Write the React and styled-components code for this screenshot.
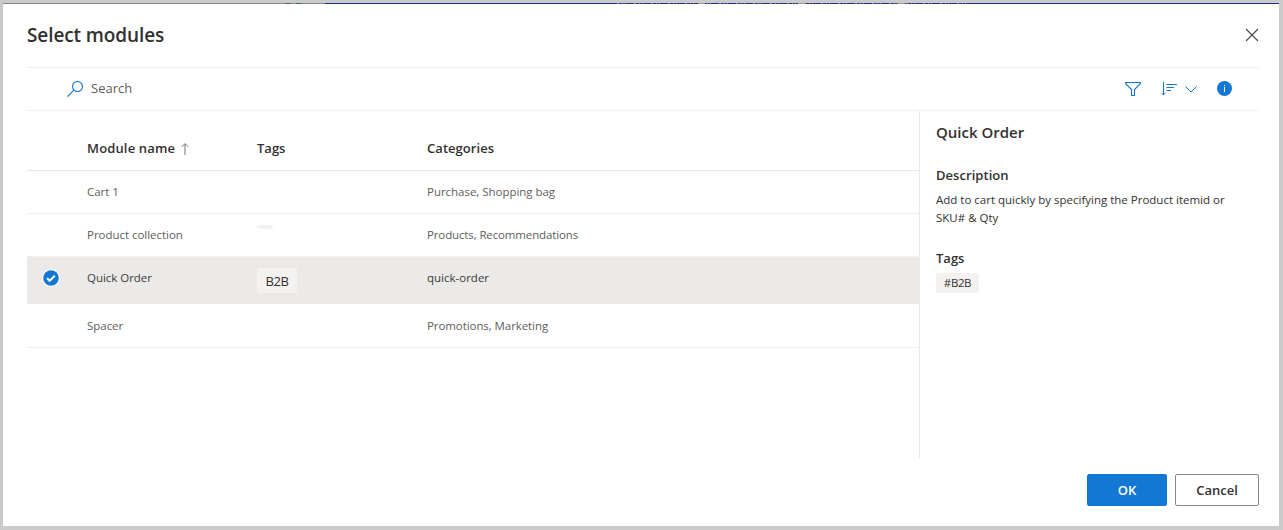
import React from "react";
import styled, { createGlobalStyle, css } from "styled-components";

const GlobalStyle = createGlobalStyle`
  * { box-sizing: border-box; }
  html, body { margin: 0; height: 100%; }
  #root { height: 100%; }
  body {
    background: #cacaca;
    color: #323130;
    font-family: "Open Sans", "Noto Sans", sans-serif;
    overflow: hidden;
  }
`;

const Overlay = styled.div`
  height: 530px;
  padding: 3px 4px 4px 3px;
  background: #cacaca;
`;

const Dialog = styled.section`
  display: flex;
  flex-direction: column;
  height: 523px;
  background: #fff;
`;

const PageEdge = styled.div`
  display: flex;
  flex: none;
  height: 1px;
`;

const EdgeGray = styled.div`
  width: 322px;
  background: linear-gradient(90deg, #858585 283px, #465a73 283px 287px, #858585 287px 293px, #465a73 293px 298px, #858585 298px);
`;

const EdgeNavy = styled.div`
  width: ${(p) => p.$width || "auto"};
  flex: ${(p) => (p.$width ? "none" : 1)};
  background: #17377a;
`;

const EdgeDots = styled.div`
  width: 351px;
  background:
    repeating-linear-gradient(90deg, transparent 0 81px, #9a9a9a 81px 88px, transparent 88px 100px),
    repeating-linear-gradient(90deg, #77808f 0 2px, #17377a 2px 5px, #77808f 5px 6px, #17377a 6px 8px, #77808f 8px 9px, #17377a 9px 17px);
`;

const Header = styled.header`
  display: flex;
  flex: none;
  justify-content: space-between;
  height: 63px;
  padding: 0 20px 0 24px;
`;

const Title = styled.h1`
  margin: 17px 0 0;
  font-size: 19px;
  font-weight: 600;
  line-height: 28px;
  letter-spacing: -0.1px;
`;

const CloseButton = styled.button`
  width: 14px;
  height: 14px;
  margin-top: 24px;
  padding: 0;
  border: 0;
  background: none;
  svg { display: block; }
`;

const Toolbar = styled.div`
  display: flex;
  flex: none;
  align-items: center;
  height: 44px;
  margin: 0 20px 0 24px;
  padding: 0 26px 0 40px;
  border-top: 1px solid #f1f0ef;
  border-bottom: 1px solid #f1f0ef;
  svg { display: block; flex: none; }
`;

const SearchLabel = styled.label`
  flex: 1;
  margin-left: 8px;
  padding-bottom: 2px;
  color: #605e5c;
  font-size: 13px;
  line-height: 20px;
`;

const ToolbarActions = styled.div`
  display: flex;
  align-items: center;
`;

const SortGroup = styled.div`
  display: flex;
  align-items: center;
  gap: 8px;
  margin: 0 20px 0 20px;
`;

const Body = styled.div`
  display: flex;
  flex: none;
  height: 347px;
  margin: 0 20px 0 24px;
`;

const Table = styled.div`
  width: 892px;
`;

const columns = css`
  display: grid;
  grid-template-columns: 60px 170px 170px 1fr;
  align-items: start;
`;

const HeadRow = styled.div`
  ${columns}
  height: 60px;
  padding-top: 27px;
  border-bottom: 1px solid #eae9e8;
`;

const HeadCell = styled.div`
  display: flex;
  font-size: 13px;
  font-weight: 600;
  line-height: 20px;
  letter-spacing: ${(p) => p.$track || "0"};
  svg { display: block; margin: 5px 0 0 5.5px; }
`;

const Row = styled.div`
  ${columns}
  height: ${(p) => p.$height}px;
  padding-top: ${(p) => p.$inset || 11}px;
  border-bottom: 1px solid ${(p) => (p.$selected ? "#ebeae9" : "#f1f0ef")};
  background: ${(p) => (p.$selected ? "#ebeae9" : "#fff")};
  color: ${(p) => (p.$selected ? "#3b3a39" : "#605e5c")};
`;

const Cell = styled.div`
  font-size: 11.5px;
  line-height: 20px;
  letter-spacing: ${(p) => p.$track || "0"};
  white-space: nowrap;
`;

const CheckCell = styled.div`
  padding: 1px 0 0 15px;
  svg { display: block; }
`;

const RowTag = styled.span`
  display: block;
  width: 40px;
  height: 25px;
  border-radius: 2px;
  background: #f3f2f1;
  color: #323130;
  font-size: 13px;
  line-height: 26px;
  letter-spacing: -0.4px;
  text-align: center;
`;

const EmptyTag = styled.span`
  display: block;
  width: 16px;
  height: 4px;
  border-radius: 2px;
  background: #f3f2f1;
`;

const Details = styled.aside`
  flex: 1;
  padding: 10px 0 0 16px;
  border-left: 1px solid #eae9e8;
`;

const DetailsTitle = styled.h2`
  margin: 0 0 22px;
  font-size: 15px;
  font-weight: 600;
  line-height: 22px;
`;

const DetailsHeading = styled.h3`
  margin: 0;
  font-size: 13px;
  font-weight: 600;
  line-height: 20px;
  letter-spacing: ${(p) => p.$track || "0"};
`;

const Description = styled.p`
  width: 300px;
  margin: 6px 0 21px;
  font-size: 11.5px;
  line-height: 18px;
`;

const DetailsTag = styled.span`
  display: block;
  width: 43px;
  height: 20px;
  margin-top: 5px;
  border-radius: 2px;
  background: #f3f2f1;
  font-size: 11.5px;
  line-height: 20px;
  letter-spacing: -0.4px;
  text-align: center;
`;

const Footer = styled.footer`
  display: flex;
  flex: none;
  justify-content: flex-end;
  gap: 8px;
  padding: 16px 20px 20px;
`;

const Button = styled.button`
  width: ${(p) => (p.$primary ? 80 : 84)}px;
  height: 32px;
  padding: 0;
  border: 1px solid ${(p) => (p.$primary ? "#1278d3" : "#8a8886")};
  border-radius: 2px;
  background: ${(p) => (p.$primary ? "#1278d3" : "#fff")};
  color: ${(p) => (p.$primary ? "#fff" : "#323130")};
  font-family: inherit;
  font-size: 13px;
  font-weight: 600;
  line-height: 30px;
`;

const BLUE = "#1278d3";

const CloseIcon = () => (
  <svg width="14" height="14" fill="none" stroke="#484644" strokeWidth="1.1">
    <path d="M1 1l12 12M13 1l-12 12" />
  </svg>
);

const SearchIcon = () => (
  <svg width="16" height="16" fill="none" stroke={BLUE} strokeWidth="1.1">
    <circle cx="10.5" cy="5.5" r="5" />
    <path d="M6.9 9.1L.4 15.6" />
  </svg>
);

const FilterIcon = () => (
  <svg width="16" height="16" fill="none" stroke={BLUE} strokeWidth="1.1">
    <path d="M.5 1.5h15v1L9.5 8.6v5.9h-3V8.6L.5 2.5z" />
  </svg>
);

const SortIcon = () => (
  <svg width="16" height="16" fill="none" stroke={BLUE} strokeWidth="1">
    <path d="M2.5 1v13M.3 11.7l2.2 2.2 2.2-2.2" />
    <path d="M5.5 3.5H16M5.5 6.5H13M5.5 9.5H10" strokeWidth="1.2" />
  </svg>
);

const ChevronIcon = () => (
  <svg width="12" height="16" fill="none" stroke={BLUE} strokeWidth="1">
    <path d="M.4 5.4L6 11l5.6-5.6" />
  </svg>
);

const InfoIcon = () => (
  <svg width="16" height="16">
    <circle cx="7.5" cy="7.5" r="7.5" fill={BLUE} />
    <path d="M7 6h1v5H7zM7 4h1v1H7z" fill="#fff" />
  </svg>
);

const SortUpIcon = () => (
  <svg width="8" height="12" fill="none" stroke="#797775" strokeWidth="1">
    <path d="M4 .7v11.3M.9 3.8L4 .7l3.1 3.1" />
  </svg>
);

const CheckIcon = () => (
  <svg width="18" height="18">
    <circle cx="9" cy="9" r="9" fill="#fff" />
    <circle cx="9" cy="9" r="7.8" fill={BLUE} />
    <path d="M5 9.2l2.7 2.6 5.2-5.2" fill="none" stroke="#fff" strokeWidth="2" />
  </svg>
);

const rows = [
  { name: "Cart 1", categories: "Purchase, Shopping bag", height: 43, track: "-0.03px" },
  { name: "Product collection", categories: "Products, Recommendations", height: 43, tag: "", track: "-0.13px" },
  { name: "Quick Order", categories: "quick-order", height: 47, tag: "B2B", selected: true },
  { name: "Spacer", categories: "Promotions, Marketing", height: 44, inset: 12, track: "-0.08px" },
];

export default function App() {
  return (
    <Overlay>
      <GlobalStyle />
      <Dialog>
        <PageEdge>
          <EdgeGray />
          <EdgeNavy $width="292px" />
          <EdgeDots />
          <EdgeNavy />
        </PageEdge>
        <Header>
          <Title>Select modules</Title>
          <CloseButton aria-label="Close"><CloseIcon /></CloseButton>
        </Header>
        <Toolbar>
          <SearchIcon />
          <SearchLabel>Search</SearchLabel>
          <ToolbarActions>
            <FilterIcon />
            <SortGroup><SortIcon /><ChevronIcon /></SortGroup>
            <InfoIcon />
          </ToolbarActions>
        </Toolbar>
        <Body>
          <Table>
            <HeadRow>
              <span />
              <HeadCell $track="0.15px">Module name<SortUpIcon /></HeadCell>
              <HeadCell>Tags</HeadCell>
              <HeadCell $track="0.05px">Categories</HeadCell>
            </HeadRow>
            {rows.map((r) => (
              <Row key={r.name} $height={r.height} $inset={r.inset} $selected={r.selected}>
                <CheckCell>{r.selected && <CheckIcon />}</CheckCell>
                <Cell $track="-0.03px">{r.name}</Cell>
                <div>
                  {r.tag && <RowTag>{r.tag}</RowTag>}
                  {r.tag === "" && <EmptyTag />}
                </div>
                <Cell $track={r.track}>{r.categories}</Cell>
              </Row>
            ))}
          </Table>
          <Details>
            <DetailsTitle>Quick Order</DetailsTitle>
            <DetailsHeading $track="0.05px">Description</DetailsHeading>
            <Description>Add to cart quickly by specifying the Product itemid or SKU# &amp; Qty</Description>
            <DetailsHeading>Tags</DetailsHeading>
            <DetailsTag>#B2B</DetailsTag>
          </Details>
        </Body>
        <Footer>
          <Button $primary>OK</Button>
          <Button>Cancel</Button>
        </Footer>
      </Dialog>
    </Overlay>
  );
}
